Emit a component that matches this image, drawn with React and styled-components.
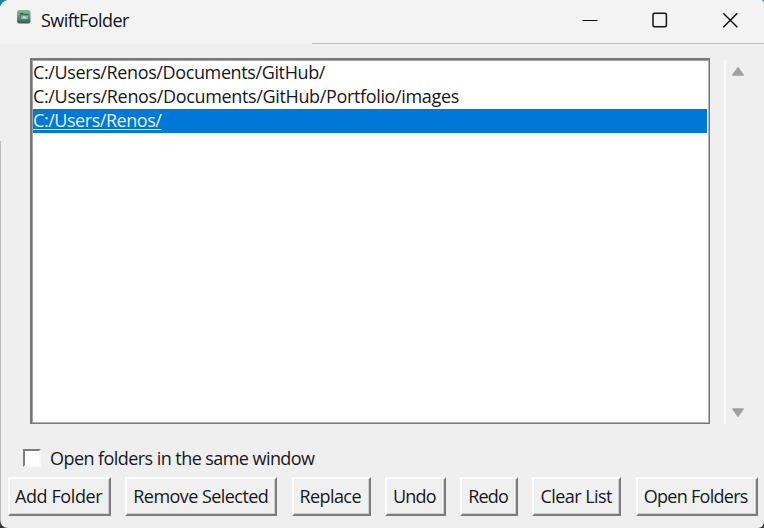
import React, { useState } from "react";
import styled, { createGlobalStyle } from "styled-components";

const GlobalStyle = createGlobalStyle`
  body { margin: 0; overflow: hidden; background: linear-gradient(#1c8792 0 50%, #343434 50%); }
  * { box-sizing: border-box; }
`;

const Window = styled.main`
  width: 764px;
  height: 528px;
  display: flex;
  flex-direction: column;
  background: linear-gradient(#bcbcbc, #bcbcbc) 0 141px / 1px 387px no-repeat, #efefef;
  border-radius: 9px 4px 6px 8px;
  overflow: hidden;
  font-family: "Open Sans", "Noto Sans", sans-serif;
  font-size: 18px;
  color: #17171c;
`;

const TitleBar = styled.header`
  height: 44px;
  flex: none;
  display: flex;
  align-items: flex-start;
  background: linear-gradient(#c2c2c2, #c2c2c2) 312px 43px / 452px 1px no-repeat, #f3f3f3;
`;

const AppIcon = styled.svg`
  flex: none;
  margin: 9px 0 0 16px;
`;

const Title = styled.h1`
  margin: 8px 0 0 9px;
  flex: 1;
  font-size: 18px;
  line-height: 24px;
  font-weight: 400;
  color: #111;
  letter-spacing: ${(p) => p.$spacing}px;
`;

const WindowControls = styled.div`
  display: flex;
  height: 39px;
  margin-right: -1px;
`;

const ControlButton = styled.button`
  width: 70px;
  padding: 0;
  border: 0;
  background: none;
  display: grid;
  place-items: center;
`;

const Content = styled.section`
  display: flex;
  height: 381px;
  flex: none;
  padding: 14px 18px 0 30px;
`;

const FolderList = styled.ul`
  width: 680px;
  height: 366px;
  margin: 0;
  padding: 1px 2px 1px 1px;
  list-style: none;
  background: #fff;
  border: solid #777;
  border-width: 2px 1px 1px 2px;
  box-shadow: inset 1px 1px #a4a4a4, inset -1px -1px #b4b4b4;
`;

const FolderRow = styled.li`
  height: 24px;
  line-height: 23px;
  white-space: nowrap;
  letter-spacing: ${(p) => p.$spacing}px;
  color: ${(p) => (p.$selected ? "#e4f2ff" : "#17171c")};
  background: ${(p) => (p.$selected ? "#0078d7" : "transparent")};
  text-decoration: ${(p) => (p.$selected ? "underline 1px" : "none")};
  text-decoration-skip-ink: none;
  text-underline-offset: 2px;
`;

const ScrollBar = styled.div`
  margin: 2px 0 0 14px;
  width: 22px;
  height: 364px;
  border-left: 2px solid #fbfbfb;
  display: flex;
  flex-direction: column;
  justify-content: space-between;
  padding: 6px 0 6px 6px;
`;

const Option = styled.label`
  display: flex;
  align-items: center;
  height: 24px;
  margin: 21px 0 0 23px;
  letter-spacing: ${(p) => p.$spacing}px;
`;

const CheckBox = styled.input`
  appearance: none;
  width: 18px;
  height: 18px;
  margin: 0 9px 0 0;
  background: #fff;
  border: 2px solid;
  border-color: #7d7d7d #f9f9f9 #f9f9f9 #7d7d7d;
  outline: none;
`;

const ButtonRow = styled.footer`
  display: flex;
  gap: 14.3px;
  padding: 0 6px 0 8px;
  margin-top: 7px;
`;

const ActionButton = styled.button`
  width: ${(p) => p.$width}px;
  height: 39px;
  flex: none;
  padding: 0 0 1px ${(p) => p.$inset}px;
  text-align: left;
  white-space: nowrap;
  background: #f0f0f0;
  border: 2px solid;
  border-color: #fff #7c7c7c #7c7c7c #fff;
  box-shadow: inset -1px -1px #d2d2d2;
  color: inherit;
  font: inherit;
  letter-spacing: ${(p) => p.$spacing}px;
`;

const folders = [
  { path: "C:/Users/Renos/Documents/GitHub/", spacing: -0.38 },
  { path: "C:/Users/Renos/Documents/GitHub/Portfolio/images", spacing: -0.35 },
  { path: "C:/Users/Renos/", spacing: -0.45 },
];

const actions = [
  { label: "Add Folder", width: 103, inset: 5, spacing: -0.4 },
  { label: "Remove Selected", width: 152, inset: 6, spacing: -0.55 },
  { label: "Replace", width: 79, inset: 6, spacing: -0.6 },
  { label: "Undo", width: 61, inset: 6, spacing: -0.8 },
  { label: "Redo", width: 58, inset: 6, spacing: -0.8 },
  { label: "Clear List", width: 89, inset: 6, spacing: -0.55 },
  { label: "Open Folders", width: 122, inset: 6, spacing: -0.72 },
];

export default function App() {
  const [selected, setSelected] = useState(2);
  return (
    <>
      <GlobalStyle />
      <Window>
        <TitleBar>
          <AppIcon width="16" height="16" viewBox="0 0 16 16">
            <defs>
              <linearGradient id="tile" x2="0" y2="1">
                <stop stopColor="#86bd7c" />
                <stop offset=".5" stopColor="#5f9a78" />
                <stop offset="1" stopColor="#36574f" />
              </linearGradient>
            </defs>
            <rect x="1" y="1" width="13.5" height="13.5" rx="2.5" fill="url(#tile)" />
            <path d="M4 4h3l1 1h4.5v6H4z" fill="#4b7a80" />
            <path d="M4 4.5h3l1 1h4.5" fill="none" stroke="#345f5c" />
            <path d="M5 6.5h7v3.5H5z" fill="#8fb5b0" />
            <path d="M7 7.5h3v2H7z" fill="#c3dcd3" />
          </AppIcon>
          <Title $spacing={-0.55}>SwiftFolder</Title>
          <WindowControls>
            <ControlButton aria-label="Minimize">
              <svg width="16" height="16"><path d="M.5 8.5h15" stroke="#111" strokeWidth="1.1" /></svg>
            </ControlButton>
            <ControlButton aria-label="Maximize">
              <svg width="16" height="16"><rect x="1" y="1.3" width="13.4" height="13.4" rx="1.5" fill="none" stroke="#111" strokeWidth="1.5" /></svg>
            </ControlButton>
            <ControlButton aria-label="Close">
              <svg width="16" height="16"><path d="M1.3 1.3l14 14M15.3 1.3l-14 14" stroke="#111" strokeWidth="1.5" /></svg>
            </ControlButton>
          </WindowControls>
        </TitleBar>
        <Content>
          <FolderList>
            {folders.map((f, i) => (
              <FolderRow key={f.path} $selected={i === selected} $spacing={f.spacing} onClick={() => setSelected(i)}>
                {f.path}
              </FolderRow>
            ))}
          </FolderList>
          <ScrollBar>
            <svg width="13" height="11"><path d="M6 2L11 9H1z" fill="#a0a0a0" stroke="#a0a0a0" strokeWidth="1.6" strokeLinejoin="round" /></svg>
            <svg width="13" height="11"><path d="M6 9L11 2H1z" fill="#a0a0a0" stroke="#a0a0a0" strokeWidth="1.6" strokeLinejoin="round" /></svg>
          </ScrollBar>
        </Content>
        <Option $spacing={-0.56}>
          <CheckBox type="checkbox" />
          Open folders in the same window
        </Option>
        <ButtonRow>
          {actions.map((a) => (
            <ActionButton key={a.label} $width={a.width} $inset={a.inset} $spacing={a.spacing}>{a.label}</ActionButton>
          ))}
        </ButtonRow>
      </Window>
    </>
  );
}
